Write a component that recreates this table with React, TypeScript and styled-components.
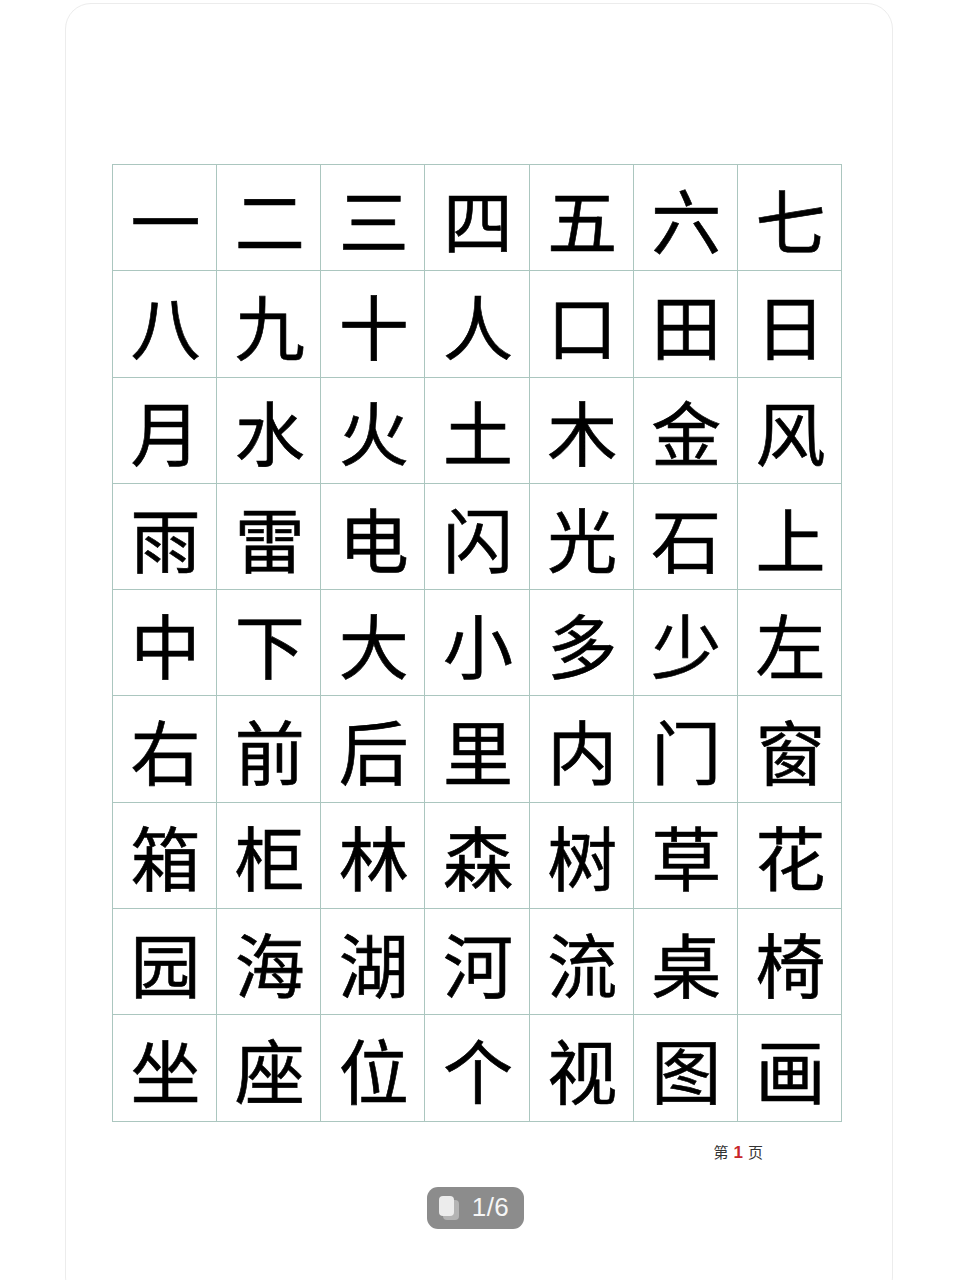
import React from "react";
import styled, { createGlobalStyle } from "styled-components";

const Global = createGlobalStyle`
  html, body { margin: 0; padding: 0; background: #ffffff; }
  body { font-family: "Noto Sans CJK SC", "Noto Sans", sans-serif; overflow: hidden; }
`;

const Page = styled.div`
  width: 960px;
  height: 1280px;
  overflow: hidden;
  padding: 3px 0 0 65px;
  box-sizing: border-box;
`;

const Card = styled.div`
  width: 828px;
  height: 1300px;
  box-sizing: border-box;
  border: 1.5px solid #ececec;
  border-radius: 26px;
  background: #ffffff;
  padding: 160px 0 0 46px;
  display: flex;
  flex-direction: column;
`;

const Grid = styled.div`
  width: 730px;
  display: grid;
  grid-template-columns: repeat(7, 1fr);
  grid-auto-rows: 106.3px;
  border-top: 1px solid #abc6bf;
  border-left: 1px solid #abc6bf;
  box-sizing: border-box;
`;

const Cell = styled.div`
  border-right: 1px solid #abc6bf;
  border-bottom: 1px solid #abc6bf;
  display: flex;
  align-items: center;
  justify-content: center;
  font-family: "Noto Sans CJK SC", sans-serif;
  font-size: 70px;
  font-weight: 400;
  color: #000;
  line-height: 1;
  padding-top: 2px;
  padding-left: 2px;
  -webkit-text-stroke: 0.6px #000;
`;

const PageNo = styled.div`
  width: 651px;
  margin-top: 19px;
  display: flex;
  justify-content: flex-end;
  align-items: baseline;
  gap: 5px;
  font-family: "Noto Sans CJK SC", sans-serif;
  font-size: 15px;
  font-weight: 400;
  color: #333;
`;

const PageNum = styled.span`
  color: #c8262a;
  font-weight: 700;
  font-family: "Liberation Sans", sans-serif;
  font-size: 17px;
`;

const PillRow = styled.div`
  width: 730px;
  display: flex;
  justify-content: center;
  margin-top: 24px;
  padding-right: 3px;
  box-sizing: border-box;
`;

const Pill = styled.div`
  width: 97px;
  height: 42px;
  border-radius: 11px;
  background: #8c8c8c;
  display: flex;
  align-items: center;
  justify-content: center;
  gap: 12px;
  padding-right: 4px;
  box-sizing: border-box;
`;

const PillText = styled.span`
  font-family: "Liberation Sans", sans-serif;
  font-size: 26px;
  color: #f6f6f6;
  letter-spacing: 0.5px;
`;

const chars =
  "一二三四五六七八九十人口田日月水火土木金风雨雷电闪光石上中下大小多少左右前后里内门窗箱柜林森树草花园海湖河流桌椅坐座位个视图画".split("");

export default function App() {
  return (
    <Page>
      <Global />
      <Card>
        <Grid>
          {chars.map((c, i) => (
            <Cell key={i}>{c}</Cell>
          ))}
        </Grid>
        <PageNo>
          <span>第</span>
          <PageNum>1</PageNum>
          <span>页</span>
        </PageNo>
        <PillRow>
          <Pill>
            <svg width="22" height="26" viewBox="0 0 22 26">
              <rect x="5" y="5" width="16" height="20" rx="4" fill="#b4b4b4" />
              <rect x="1" y="1" width="15" height="20" rx="4" fill="#ececec" />
            </svg>
            <PillText>1/6</PillText>
          </Pill>
        </PillRow>
      </Card>
    </Page>
  );
}
